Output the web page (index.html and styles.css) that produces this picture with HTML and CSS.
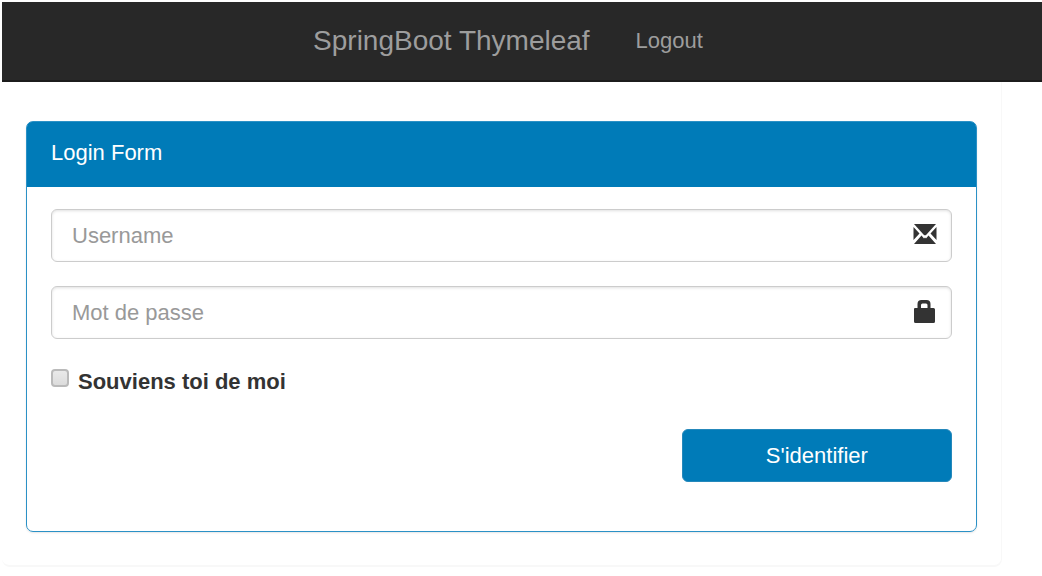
FILE: index.html
```html
<!DOCTYPE html>
<html lang="fr">
<head>
<meta charset="utf-8">
<meta name="viewport" content="width=device-width, initial-scale=1">
<title>Login Form</title>
<link rel="stylesheet" href="styles.css">
</head>
<body>
<nav class="navbar">
  <a class="brand" href="#">SpringBoot Thymeleaf</a>
  <a class="nav-link" href="#">Logout</a>
</nav>
<main class="container">
  <section class="panel">
    <h1 class="panel-heading">Login Form</h1>
    <form class="panel-body">
      <div class="field">
        <input class="field-input" type="text" aria-label="Username" placeholder="Username">
        <svg class="field-icon" viewBox="0 0 24 24" aria-hidden="true">
          <path d="M1 1H23L13.500 11.500L12 12.500L10.500 11.500Z"/>
          <path d="M0.500 4L6.500 10.500L0.500 17ZM23.500 4L17.500 10.500L23.500 17Z"/>
          <path d="M1 21L8.500 12.500L11 15.500L12 14.500L13 15.500L15.500 12.500L23 21Z"/>
        </svg>
      </div>
      <div class="field">
        <input class="field-input" type="password" aria-label="Mot de passe" placeholder="Mot de passe">
        <svg class="field-icon" viewBox="0 0 24 24" aria-hidden="true">
          <path fill-rule="evenodd" d="M1 9Q1 8 2 8H4.500V4Q4.500 0 8.500 0H13.500Q17.500 0 17.500 4V8H20.500Q22 8 22 9.500V21.500Q22 23 20.500 23H2.500Q1 23 1 21.500ZM8 8H14.500V5Q14.500 3.500 13 3.500H9.500Q8 3.500 8 5Z"/>
        </svg>
      </div>
      <div class="remember">
        <input class="remember-box" type="checkbox" id="remember">
        <label for="remember">Souviens toi de moi</label>
      </div>
      <button class="submit" type="submit">S'identifier</button>
    </form>
  </section>
</main>
</body>
</html>
```
FILE: styles.css
```css
* {
  box-sizing: border-box;
}

body {
  margin: 0;
  padding: 2px 0 0 2px;
  background: #fff;
  color: #333;
  font: 22px/32px "Liberation Sans", Arial, sans-serif;
}

.navbar {
  display: flex;
  align-items: center;
  justify-content: center;
  gap: 46px;
  padding: 22px 28px 22px 0;
  border-bottom: 2px solid #1c1c1c;
  background: #282828;
  line-height: 34px;
}

.navbar a {
  color: #9d9d9d;
  text-decoration: none;
}

.navbar .brand {
  font-size: 28px;
}

.container {
  margin-right: 40px;
  padding: 39px 24px 33px;
  border: solid #f8f8f8;
  border-width: 0 1px 2px 0;
  border-radius: 0 0 8px 8px;
}

.panel {
  border: 1px solid #2b91c6;
  border-radius: 7px;
  box-shadow: 0 1px 2px rgba(0, 0, 0, 0.1);
}

.panel-heading {
  margin: 0;
  padding: 15px 24px 18px;
  border-radius: 5px 5px 0 0;
  background: #007bb8;
  color: #fff;
  font-size: 22px;
  font-weight: 400;
}

.panel-body {
  display: flex;
  flex-direction: column;
  padding: 22px 24px 49px;
}

.field {
  position: relative;
  margin-bottom: 24px;
}

.field-input {
  display: block;
  width: 100%;
  height: 53px;
  padding: 0 56px 0 20px;
  border: 1px solid #ccc;
  border-radius: 6px;
  background: #fff;
  box-shadow: inset 0 1px 3px rgba(0, 0, 0, 0.12);
  color: #555;
  font: inherit;
}

.field-input::placeholder {
  color: #999;
  opacity: 1;
}

.field-icon {
  position: absolute;
  top: 14px;
  right: 15px;
  width: 24px;
  height: 24px;
  fill: #333;
  pointer-events: none;
}

.remember {
  display: flex;
  gap: 9px;
  padding-top: 3px;
  font-weight: 700;
}

.remember-box {
  appearance: none;
  width: 18px;
  height: 18px;
  margin: 3px 0 0;
  border: 2px solid #bababa;
  border-radius: 4px;
  background: linear-gradient(#e9e9e9, #dcdcdc);
}

.remember-box:checked {
  background: #007bb8;
}

.submit {
  align-self: flex-end;
  width: 30%;
  height: 53px;
  margin-top: 31px;
  border: 1px solid #2588bb;
  border-radius: 6px;
  background: #007bb8;
  color: #fff;
  font: inherit;
}
```
